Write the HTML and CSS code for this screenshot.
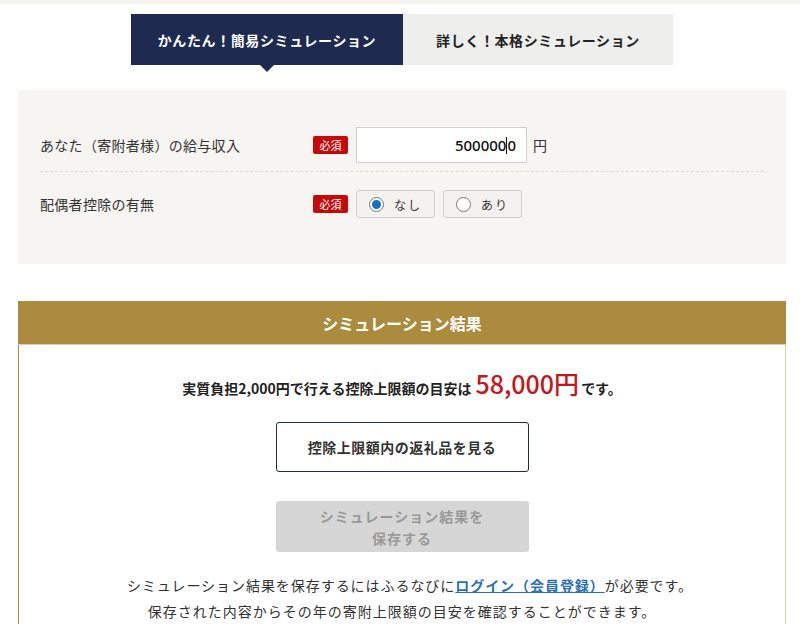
FILE: index.html
```html
<!DOCTYPE html>
<html lang="ja">
<head>
<meta charset="utf-8">
<link rel="stylesheet" href="styles.css">
</head>
<body>
<div class="topstrip"></div>
<div class="page">
  <div class="tabs">
    <div class="tab active">かんたん！簡易シミュレーション</div>
    <div class="tab">詳しく！本格シミュレーション</div>
  </div>
  <div class="form">
    <div class="row first">
      <div class="label">あなた（寄附者様）の給与収入</div>
      <span class="req">必須</span>
      <div class="input">500000<span class="caret"></span>0</div>
      <span class="unit">円</span>
    </div>
    <div class="row">
      <div class="label">配偶者控除の有無</div>
      <span class="req">必須</span>
      <div class="radio"><span class="dot on"></span>なし</div>
      <div class="radio"><span class="dot"></span>あり</div>
    </div>
  </div>
  <div class="result">
    <div class="result-head">シミュレーション結果</div>
    <div class="result-body">
      <p class="summary">実質負担2,000円で行える控除上限額の目安は <span class="amount">58,000円</span>です。</p>
      <a class="btn-outline">控除上限額内の返礼品を見る</a>
      <a class="btn-disabled">シミュレーション結果を<br>保存する</a>
      <p class="note"><span class="line1">シミュレーション結果を保存するにはふるなびに<a class="link">ログイン（会員登録）</a>が必要です。</span><br>保存された内容からその年の寄附上限額の目安を確認することができます。</p>
    </div>
  </div>
</div>
</body>
</html>
```
FILE: styles.css
```css
* { box-sizing: border-box; }
html, body { margin: 0; padding: 0; background: #fff; }
body {
  font-family: "Noto Sans CJK JP", "Noto Sans", sans-serif;
  color: #333;
  height: 634px;
  overflow: hidden;
}
.topstrip { height: 4px; background: #f6f4ee; }
.page { width: 768px; margin: 0 0 0 18px; }
.tabs {
  display: flex;
  justify-content: center;
  margin-top: 10px;
}
.tab {
  height: 51px;
  display: flex;
  align-items: center;
  justify-content: center;
  font-size: 14px;
  font-weight: bold;
  letter-spacing: 0.6px;
  background: #eeeeec;
  color: #222;
  width: 270px;
  position: relative;
}
.tab.active {
  width: 272px;
  background: #1e2a50;
  color: #fff;
}
.tab.active::after {
  content: "";
  position: absolute;
  left: 50%;
  bottom: -7px;
  margin-left: -7px;
  border-left: 7px solid transparent;
  border-right: 7px solid transparent;
  border-top: 7px solid #1e2a50;
}
.form {
  margin-top: 25px;
  background: #f6f5f1;
  padding: 32px 22px 37px;
}
.row {
  display: flex;
  align-items: center;
  height: 46px;
}
.row.first {
  border-bottom: 1px dashed #dddad2;
  height: 50px;
  padding-bottom: 3px;
  margin-bottom: 9px;
}
.label {
  width: 273px;
  font-size: 14px;
  color: #333;
  letter-spacing: 0.3px;
}
.req {
  display: inline-flex;
  align-items: center;
  justify-content: center;
  width: 35px;
  height: 18px;
  background: #c40a0a;
  color: #fff;
  font-size: 11px;
  border-radius: 2px;
  margin-right: 8px;
}
.input {
  width: 171px;
  height: 36px;
  background: #fff;
  border: 1px solid #cfcfcf;
  display: flex;
  align-items: center;
  justify-content: flex-end;
  padding-right: 10px;
  font-family: "Noto Sans", "Roboto", sans-serif;
  font-size: 15px;
  font-weight: 500;
  color: #111;
}
.caret { display: inline-block; width: 1px; height: 17px; background: #111; }
.unit { margin-left: 6px; font-size: 14px; color: #333; }
.radio {
  width: 79px;
  height: 28px;
  border: 1px solid #cfcfcf;
  border-radius: 3px;
  background: #f3f2ee;
  display: flex;
  align-items: center;
  padding-left: 12px;
  font-size: 12px;
  color: #333;
  letter-spacing: 2px;
  margin-right: 8px;
}
.dot {
  width: 15px;
  height: 15px;
  border-radius: 50%;
  border: 1px solid #777;
  background: #fff;
  margin-right: 10px;
  position: relative;
}
.dot.on::after {
  content: "";
  position: absolute;
  left: 2px; top: 2px;
  width: 9px; height: 9px;
  border-radius: 50%;
  background: #1470c8;
}
.result {
  margin-top: 37px;
  border-left: 1px solid #ab8b3e;
  border-right: 1px solid #e1cfa3;
}
.result-head {
  height: 44px;
  background: #ab8b3e;
  color: #fff;
  font-weight: bold;
  font-size: 16px;
  display: flex;
  align-items: center;
  justify-content: center;
  border-bottom: 1px solid #e1cfa3;
  margin: 0 -1px;
}
.result-body {
  display: flex;
  flex-direction: column;
  align-items: center;
  padding-top: 20px;
}
.summary {
  margin: 0;
  font-size: 14px;
  font-weight: bold;
  color: #222;
  height: 34px;
  display: flex;
  align-items: baseline;
}
.amount {
  color: #c4161c;
  font-size: 25px;
  font-family: "Noto Sans CJK JP", sans-serif;
  font-weight: 500;
  margin: 0 2px 0 4px;
}
.btn-outline {
  margin-top: 23px;
  width: 253px;
  height: 50px;
  border: 1px solid #1e2a50;
  border-radius: 3px;
  display: flex;
  align-items: center;
  justify-content: center;
  font-size: 14px;
  font-weight: bold;
  color: #333;
  letter-spacing: 0.5px;
}
.btn-disabled {
  margin-top: 29px;
  width: 253px;
  height: 51px;
  background: #d6d6d6;
  border-radius: 3px;
  display: flex;
  align-items: center;
  justify-content: center;
  text-align: center;
  font-size: 14px;
  font-weight: bold;
  color: #999;
  line-height: 22px;
  letter-spacing: 1px;
}
.note {
  margin: 20px 0 0;
  text-align: center;
  font-size: 14px;
  line-height: 26px;
  color: #333;
  letter-spacing: 1px;
}
.line1 { padding-left: 16px; letter-spacing: 0.95px; }
.link {
  color: #2a6fb4;
  font-weight: bold;
  text-decoration: underline;
}
```
